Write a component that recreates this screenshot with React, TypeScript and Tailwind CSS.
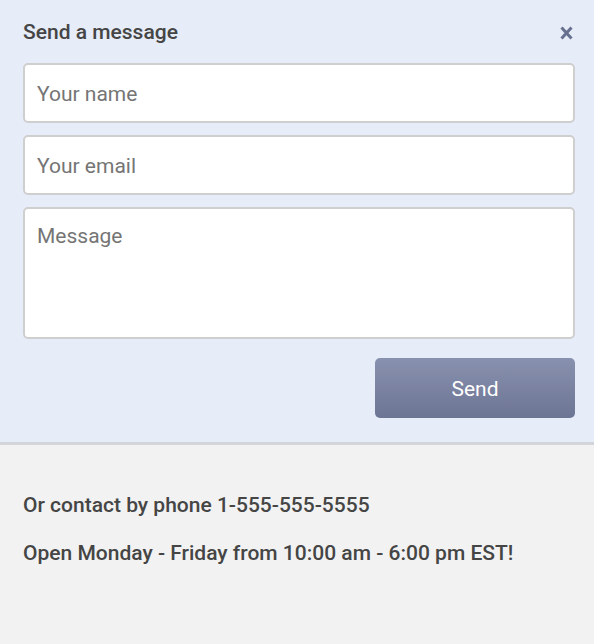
import React from "react";

export default function App() {
  return (
    <div className="w-[594px] h-[644px] flex flex-col bg-[#f2f2f2]" style={{ fontFamily: "Roboto, 'Liberation Sans', sans-serif" }}>
      <div className="bg-[#e6ecf8] pl-[23px] pr-[19px] pt-[18px] pb-[24px] border-b-[3px] border-[#d4d5db]">
        <div className="flex items-center justify-between h-[28px]">
          <div className="text-[21px] leading-[28px] font-medium text-[#454545]">Send a message</div>
          <svg width="13" height="14" viewBox="0 0 13 14" className="mr-[2px] mt-[1px]">
            <path d="M1.5 1.5 L11.5 12.5 M11.5 1.5 L1.5 12.5" stroke="#67718f" strokeWidth="3" strokeLinecap="butt" />
          </svg>
        </div>
        <div className="mt-[17px] flex flex-col gap-[12px]">
          <input
            placeholder="Your name"
            className="h-[60px] w-full bg-white border-2 border-[#cfcfcf] rounded-[5px] px-[12px] pt-[2px] text-[21px] text-[#555] placeholder:text-[#757575] outline-none"
          />
          <input
            placeholder="Your email"
            className="h-[60px] w-full bg-white border-2 border-[#cfcfcf] rounded-[5px] px-[12px] pt-[2px] text-[21px] text-[#555] placeholder:text-[#757575] outline-none"
          />
          <textarea
            placeholder="Message"
            className="h-[132px] w-full bg-white border-2 border-[#cfcfcf] rounded-[5px] px-[12px] pt-[13px] text-[21px] leading-[28px] text-[#555] placeholder:text-[#757575] outline-none resize-none"
          />
        </div>
        <div className="flex justify-end mt-[19px]">
          <button className="w-[200px] h-[60px] rounded-[5px] bg-gradient-to-b from-[#8891ae] to-[#6d7594] text-white text-[21px] font-normal pt-[3px]">
            Send
          </button>
        </div>
      </div>
      <div className="px-[23px] pt-[46px] flex flex-col gap-[20px] text-[21px] leading-[28px] font-medium text-[#454545]">
        <div>Or contact by phone 1-555-555-5555</div>
        <div>Open Monday - Friday from 10:00 am - 6:00 pm EST!</div>
      </div>
    </div>
  );
}
